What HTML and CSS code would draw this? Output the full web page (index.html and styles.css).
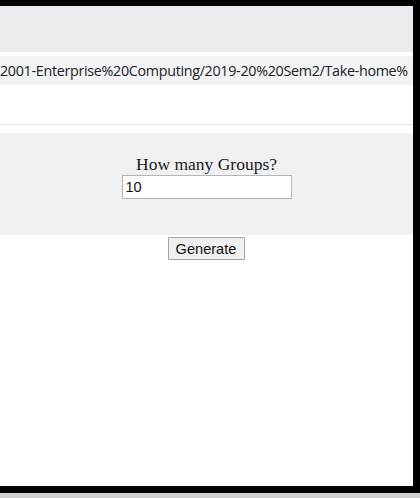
FILE: index.html
```html
<!DOCTYPE html>
<html lang="en">
<head>
<meta charset="utf-8">
<title>Groups</title>
<link rel="stylesheet" href="styles.css">
</head>
<body>
<div class="frame">
  <div class="screen">
    <div class="toolbar"></div>
    <div class="urlbar"><span class="url">2001-Enterprise%20Computing/2019-20%20Sem2/Take-home%</span></div>
    <div class="blank"></div>
    <div class="page">
      <section class="form-box">
        <label class="label" for="groups">How many Groups?</label>
        <input class="field" id="groups" type="text" value="10">
      </section>
      <div class="actions">
        <button class="btn" type="button">Generate</button>
      </div>
    </div>
  </div>
</div>
<div class="shadow"></div>
</body>
</html>
```

FILE: styles.css
```css
html, body {
  margin: 0;
  padding: 0;
  background: #ffffff;
}
.frame {
  width: 413px;
  height: 480px;
  border-top: 6px solid #000;
  border-right: 7px solid #000;
  border-bottom: 7px solid #000;
  overflow: hidden;
}
.screen {
  height: 480px;
  display: flex;
  flex-direction: column;
  background: #fff;
}
.toolbar {
  height: 46px;
  background: #e9ebee;
  flex: none;
}
.urlbar {
  margin-top: 4px;
  height: 29px;
  background: #f2f3f5;
  flex: none;
  overflow: hidden;
  white-space: nowrap;
  display: flex;
  align-items: center;
}
.url {
  font-family: "Open Sans", "Noto Sans", sans-serif;
  font-size: 14.3px;
  color: #202124;
  margin-left: 0;
  letter-spacing: -0.3px;
}
.blank {
  height: 39px;
  border-bottom: 1px solid #e4e4e4;
  flex: none;
}
.page {
  padding-top: 8px;
  display: flex;
  flex-direction: column;
  align-items: center;
}
.form-box {
  align-self: stretch;
  background: #f0f1f3;
  padding: 21px 0 36px;
  display: flex;
  flex-direction: column;
  align-items: center;
  gap: 1px;
}
.label {
  font-family: "Liberation Serif", "Times New Roman", serif;
  font-size: 17.5px;
  line-height: 20px;
  color: #1a1a1a;
}
.field {
  box-sizing: border-box;
  width: 170px;
  height: 24px;
  margin: 0;
  padding: 0 3px;
  border: 1px solid #b4b4b4;
  background: #fff;
  font-family: "Liberation Sans", Arial, sans-serif;
  font-size: 14.6px;
  color: #111;
  outline: none;
}
.actions {
  padding-top: 2px;
  display: flex;
  justify-content: center;
}
.btn {
  box-sizing: border-box;
  width: 77px;
  height: 23px;
  margin: 0 0 0 -1px;
  padding: 0;
  border: 1px solid #a6a6a6;
  border-radius: 1px;
  background: #f0f0f0;
  font-family: "Liberation Sans", Arial, sans-serif;
  font-size: 14.6px;
  color: #111;
}
.shadow {
  height: 5px;
  background: #cfcfcf;
}
```
